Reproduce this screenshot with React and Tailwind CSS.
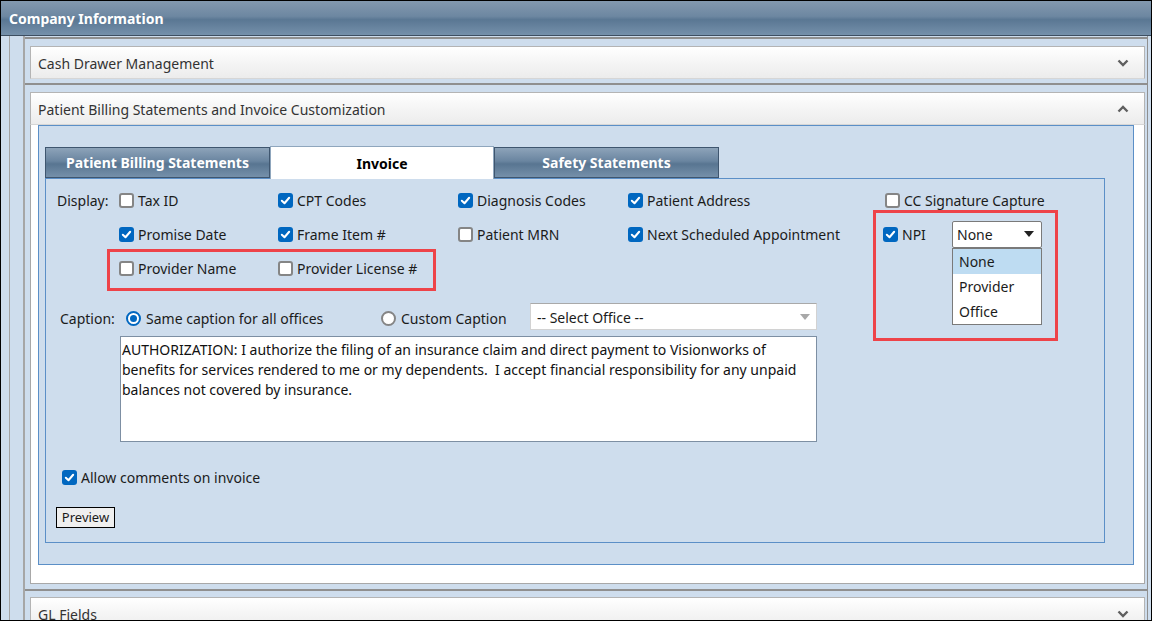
import React from "react";

function Box({ checked }) {
  if (checked) {
    return (
      <span className="w-[15px] h-[15px] shrink-0 rounded-[3px] bg-[#0067c0] flex items-center justify-center">
        <svg viewBox="0 0 12 12" className="w-[11px] h-[11px]">
          <path d="M2 6.3 L4.9 9 L10 3" stroke="white" strokeWidth="2.2" fill="none" strokeLinecap="round" strokeLinejoin="round" />
        </svg>
      </span>
    );
  }
  return <span className="w-[15px] h-[15px] shrink-0 rounded-[3px] bg-white border-2 border-[#858585]" />;
}

function Check({ checked, label }) {
  return (
    <div className="flex items-center gap-[4px] whitespace-nowrap">
      <Box checked={checked} />
      <span>{label}</span>
    </div>
  );
}

function Radio({ checked }) {
  if (checked) {
    return (
      <span className="w-[15px] h-[15px] shrink-0 rounded-full border-2 border-[#0067c0] bg-white flex items-center justify-center">
        <span className="w-[7px] h-[7px] rounded-full bg-[#0067c0]" />
      </span>
    );
  }
  return <span className="w-[15px] h-[15px] shrink-0 rounded-full border-2 border-[#858585] bg-white" />;
}

function Chevron({ up }) {
  return (
    <svg viewBox="0 0 12 8" className="w-[12px] h-[8px]">
      <path d={up ? "M1.5 6.5 L6 2 L10.5 6.5" : "M1.5 1.5 L6 6 L10.5 1.5"} stroke="#5f5f5f" strokeWidth="2.4" fill="none" />
    </svg>
  );
}

function AccHeader({ title, up }) {
  return (
    <div className="h-[33px] ml-[5px] mr-[2px] border border-[#b4b4b4] border-b-[#d6d6d6] bg-[linear-gradient(to_bottom,#ffffff,#f3f3f3_60%,#ececec)] flex items-center justify-between pl-[7px] pr-[15px] text-[#333]">
      <span className="pt-[1px]">{title}</span>
      <Chevron up={up} />
    </div>
  );
}

const tabDark =
  "w-[225px] h-[31px] mt-[1px] flex items-center justify-center font-bold text-white border border-[#3f566f] bg-[linear-gradient(to_bottom,#8da3b9,#6a85a0_45%,#587591_55%,#7590aa)]";

export default function App() {
  return (
    <div className="w-[1152px] h-[621px] overflow-hidden border border-black bg-[#cedded] font-['Noto_Sans',sans-serif] text-[14px] text-[#1b1b1b] flex flex-col">
      {/* Header */}
      <div className="h-[35px] shrink-0 border-b border-[#3d4e61] bg-[linear-gradient(to_bottom,#8399af,#6d87a1_45%,#5a7793_55%,#7590aa)] flex items-center pl-[8px]">
        <span className="text-white font-bold text-[14px]">Company Information</span>
      </div>

      <div className="flex flex-1 min-h-0">
        <div className="w-[8px] shrink-0" />
        <div className="w-[14px] shrink-0 border-l border-[#a3a3a3]" />
        <div className="flex-1 border-l-2 border-[#a6a6a6] pt-[1px] flex flex-col min-w-0">
          {/* Item 1 */}
          <div className="border-t-2 border-[#8f8f8f] pt-[7px] pb-[4px]">
            <AccHeader title="Cash Drawer Management" />
          </div>

          {/* Item 2 */}
          <div className="border-t-2 border-[#8f8f8f] pt-[7px] pb-[5px]">
            <AccHeader title="Patient Billing Statements and Invoice Customization" up />
            <div className="ml-[5px] mr-[2px] bg-white border-x border-b border-[#a8a8a8] pl-[7px] pr-[10px] pb-[18px]">
              <div className="h-[440px] border border-[#5b8fc7] bg-[#cedded] pl-[6px] pr-[28px] pt-[20px] pb-[21px] flex flex-col">
                {/* Tabs */}
                <div className="flex h-[32px] shrink-0">
                  <div className={tabDark}>Patient Billing Statements</div>
                  <div className="w-[224px] h-[33px] -mb-[1px] flex items-center justify-center font-bold text-black bg-white border border-[#8fa6bd] border-b-0 z-10">
                    Invoice
                  </div>
                  <div className={tabDark}>Safety Statements</div>
                </div>
                {/* Tab panel */}
                <div className="flex-1 border border-[#5b8fc7] pt-[4px] relative">
                  <div className="pl-[11px] grid grid-cols-[62px_159px_180px_170px_255px_1fr] auto-rows-[34px] items-center">
                    <div>Display:</div>
                    <Check label="Tax ID" />
                    <Check checked label="CPT Codes" />
                    <Check checked label="Diagnosis Codes" />
                    <Check checked label="Patient Address" />
                    <div className="ml-[2px]"><Check label="CC Signature Capture" /></div>

                    <div />
                    <Check checked label="Promise Date" />
                    <Check checked label="Frame Item #" />
                    <Check label="Patient MRN" />
                    <Check checked label="Next Scheduled Appointment" />
                    <div className="flex items-center">
                      <div className="w-[69px]"><Check checked label="NPI" /></div>
                      <div className="relative w-[90px] h-[27px] bg-white border border-[#7a7a7a] rounded-[2px] flex items-center justify-between pl-[4px] pr-[7px]">
                        <span className="pt-[1px]">None</span>
                        <svg viewBox="0 0 10 6" className="w-[10px] h-[6px]"><path d="M0 0 L10 0 L5 6 Z" fill="#222" /></svg>
                        <div className="absolute left-[-1px] top-[26px] w-[90px] bg-white border border-[#7a7a7a] z-20">
                          <div className="h-[25px] bg-[#bedcf2] flex items-center pl-[6px] pt-[1px]">None</div>
                          <div className="h-[25px] flex items-center pl-[6px] pt-[1px]">Provider</div>
                          <div className="h-[25px] flex items-center pl-[6px] pt-[1px]">Office</div>
                        </div>
                      </div>
                    </div>

                    <div />
                    <Check label="Provider Name" />
                    <Check label="Provider License #" />
                  </div>

                  {/* Caption row */}
                  <div className="mt-[18px] pl-[14px] flex items-center h-[27px]">
                    <span className="w-[66px] pt-[3px]">Caption:</span>
                    <div className="w-[255px] flex items-center gap-[5px] pt-[3px]">
                      <Radio checked />
                      <span>Same caption for all offices</span>
                    </div>
                    <div className="w-[149px] flex items-center gap-[5px] pt-[3px]">
                      <Radio />
                      <span>Custom Caption</span>
                    </div>
                    <div className="w-[287px] h-[27px] bg-white border border-[#d2d2d2] border-t-[#a9a9a9] flex items-center justify-between pl-[6px] pr-[6px]">
                      <span className="pt-[2px]">-- Select Office --</span>
                      <svg viewBox="0 0 10 6" className="w-[10px] h-[6px]"><path d="M0 0 L10 0 L5 6 Z" fill="#a8a8a8" /></svg>
                    </div>
                  </div>

                  {/* Textarea */}
                  <div className="mt-[6px] ml-[74px] w-[697px] h-[106px] bg-white border border-[#7d8fa3] pl-[1px] pt-[3px] leading-[20px] whitespace-pre text-[#111]">
                    <div>AUTHORIZATION: I authorize the filing of an insurance claim and direct payment to Visionworks of</div>
                    <div>benefits for services rendered to me or my dependents.  I accept financial responsibility for any unpaid</div>
                    <div>balances not covered by insurance.</div>
                  </div>

                  <div className="mt-[25px] pl-[16px] h-[20px] flex items-center">
                    <Check checked label="Allow comments on invoice" />
                  </div>

                  <div className="mt-[20px] ml-[10px] w-[59px] h-[21px] border border-black bg-[#efefef] flex items-center justify-center text-[13px]">
                    Preview
                  </div>

                  {/* Annotation boxes */}
                  <div className="absolute left-[61px] top-[70px] w-[329px] h-[42px] border-[3px] border-[#ee4349] pointer-events-none" />
                  <div className="absolute left-[827px] top-[31px] w-[185px] h-[131px] border-[3px] border-[#ee4349] pointer-events-none" />
                </div>
              </div>
            </div>
          </div>

          {/* Item 3 */}
          <div className="border-t-2 border-[#8f8f8f] pt-[6px]">
            <AccHeader title="GL Fields" />
          </div>
        </div>
        <div className="w-[4px] shrink-0 border-l border-[#8f8f8f]" />
      </div>
    </div>
  );
}
